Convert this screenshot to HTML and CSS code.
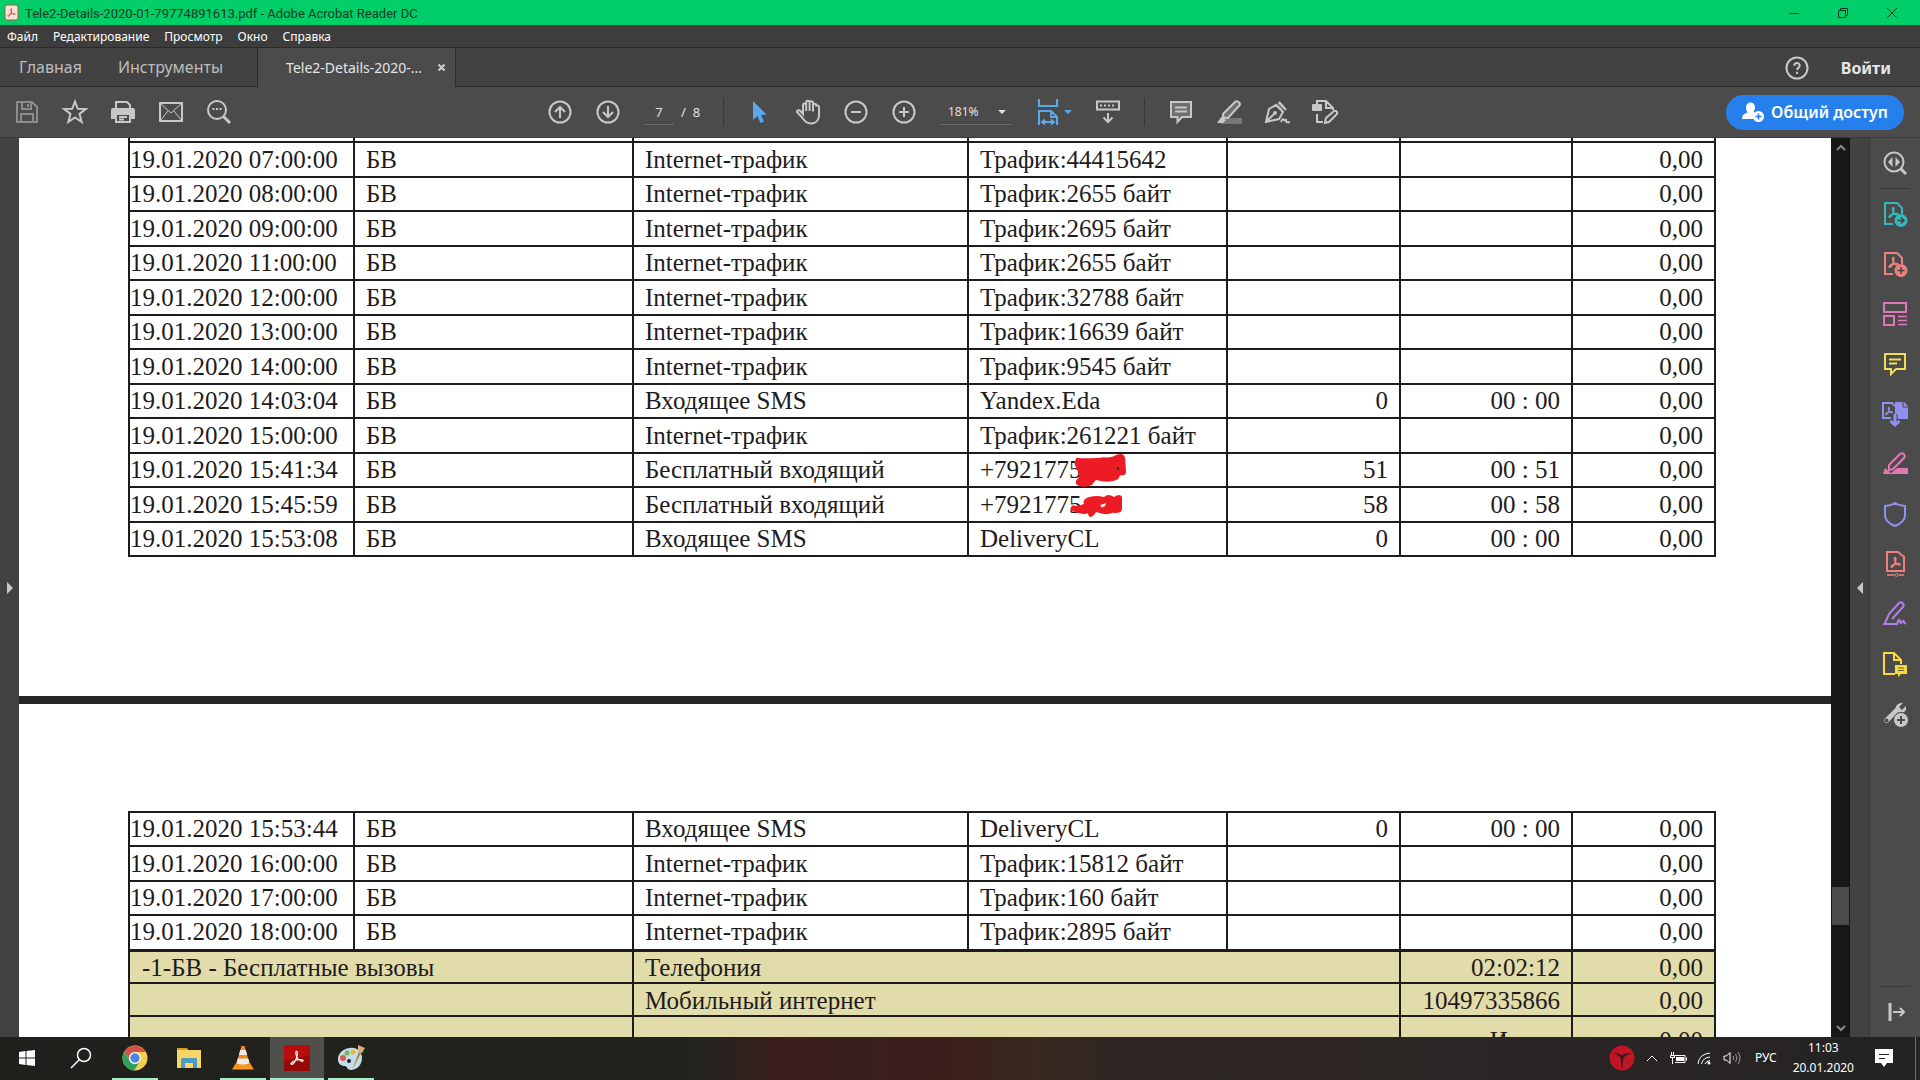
FILE: index.html
```html
<!DOCTYPE html>
<html lang="ru">
<head>
<meta charset="utf-8">
<title>Tele2-Details-2020-01-79774891613.pdf - Adobe Acrobat Reader DC</title>
<link rel="stylesheet" href="styles.css">
</head>
<body>
<svg class="defs" aria-hidden="true">
  <symbol id="pdf-mark" viewBox="0 0 16 16"><path d="M7.500 2c1.500 0 .8 3.500 0 6-.8 2.300-2.500 5.500-4.300 5.800-1.800-.6 1-3 4-3.800 2.500-.8 6-1 6.300.2.200 1.300-3 .7-4.700-1.400C7 6.500 6.300 2.200 7.500 2z" fill="none" stroke="currentColor"/></symbol>
</svg>

<header class="titlebar">
  <svg class="app-icon" width="15" height="17" viewBox="0 0 15 17"><rect x="1" y="1" width="13" height="15" rx="2" fill="#f8e3da" stroke="#b4552f"/><g color="#c8281c"><use href="#pdf-mark" x="2" y="3" width="11" height="11"/></g></svg>
  <span class="title">Tele2-Details-2020-01-79774891613.pdf - Adobe Acrobat Reader DC</span>
  <div class="window-buttons">
    <button aria-label="Свернуть"><svg width="12" height="12" viewBox="0 0 12 12"><path d="M1 6.500h10"/></svg></button>
    <button aria-label="Восстановить"><svg width="12" height="12" viewBox="0 0 12 12"><path d="M1.500 3.500h7v7h-7zM3.500 3.500v-2h7v7h-2"/></svg></button>
    <button aria-label="Закрыть"><svg width="12" height="12" viewBox="0 0 12 12"><path d="M1 1l10 10M11 1L1 11"/></svg></button>
  </div>
</header>

<nav class="menubar">
  <button>Файл</button><button>Редактирование</button><button>Просмотр</button><button>Окно</button><button>Справка</button>
</nav>

<nav class="tabs">
  <a class="tab" href="#home">Главная</a>
  <a class="tab" href="#tools">Инструменты</a>
  <div class="tab-active"><a href="#document">Tele2-Details-2020-...</a><button aria-label="Закрыть вкладку"><svg width="9" height="9" viewBox="0 0 9 9"><path d="M1.500 1.500l6 6M7.500 1.500l-6 6"/></svg></button></div>
  <div class="account">
    <button aria-label="Справка"><svg width="24" height="24" viewBox="0 0 24 24" fill="none" stroke="#c8c8c8" stroke-width="2"><circle cx="12" cy="12" r="10.500"/><path d="M9.300 9.800c0-3.600 5.400-3.600 5.400-.2 0 2-2.600 2.200-2.600 4.400M12.100 15.800v2.200"/></svg></button>
    <button class="sign-in">Войти</button>
  </div>
</nav>

<div class="toolbar">
  <div class="tools tools-left">
    <button class="disabled" aria-label="Сохранить"><svg class="ico" viewBox="0 0 24 24"><path d="M2 2h15l5 5v15H2zM7 2v7h9V2M6 22v-8h12v8M13 4v3"/></svg></button>
    <button aria-label="Избранное"><svg class="ico" viewBox="0 0 24 24"><path d="M12 1.500l2.800 7.300 8 .3-6.300 4.900 2.200 8L12 17.500 5.300 22l2.200-8-6.300-4.900 8-.3z"/></svg></button>
    <button aria-label="Печать"><svg class="ico" viewBox="0 0 24 24"><path d="M5 8V2h11l3 3v3"/><path d="M2 8h20a2 2 0 0 1 2 2v9h-4v-4H4v4H0v-9a2 2 0 0 1 2-2z" fill="currentColor" stroke="none"/><path d="M5 15v7h14v-7M8 17h8M8 19.500h5"/></svg></button>
    <button aria-label="Отправить по почте"><svg class="ico" viewBox="0 0 24 24"><path d="M1 3h22v18H1z"/><path d="M1 3l11 10L23 3M1 21l8-10M23 21l-8-10" stroke-width="1"/></svg></button>
    <button aria-label="Поиск"><svg class="ico" viewBox="0 0 24 24"><circle cx="10" cy="10" r="9"/><path d="M16.500 16.500L23 23" stroke-width="3"/><path d="M5.500 9h2M9 9h2M12.500 9h2"/></svg></button>
  </div>
  <div class="tools">
    <button aria-label="Предыдущая страница"><svg class="ico" viewBox="0 0 24 24"><circle cx="12" cy="12" r="10.500"/><path d="M12 18V7M7 12l5-5 5 5"/></svg></button>
    <button aria-label="Следующая страница"><svg class="ico" viewBox="0 0 24 24"><circle cx="12" cy="12" r="10.500"/><path d="M12 6v11M7 12l5 5 5-5"/></svg></button>
    <div class="pager"><input type="text" value="7" aria-label="Номер страницы"><span>/</span><span>8</span></div>
    <i class="divider"></i>
    <button class="selected" aria-label="Выделение"><svg class="ico" viewBox="0 0 24 24"><path d="M5 1l13.500 13.500-5.500.5 3 6.500-3.500 1.500-3-7L5 20z" fill="currentColor" stroke="none"/></svg></button>
    <button aria-label="Рука"><svg class="ico" viewBox="0 0 24 24"><path d="M7 14V5a1.600 1.600 0 0 1 3.200 0v6V2.500a1.600 1.600 0 0 1 3.400 0V11 3a1.600 1.600 0 0 1 3.400 0v8.500V5.500a1.600 1.600 0 0 1 3.300 0C22.500 5 23 6 23 8v7c0 5-3 8.500-8 8.500-4 0-6-1.500-8.500-5.500L1 11.800c0-1.600 2-2 3.500-.8L7 14z"/></svg></button>
    <button aria-label="Уменьшить"><svg class="ico" viewBox="0 0 24 24"><circle cx="12" cy="12" r="10.500"/><path d="M7 12h10"/></svg></button>
    <button aria-label="Увеличить"><svg class="ico" viewBox="0 0 24 24"><circle cx="12" cy="12" r="10.500"/><path d="M7 12h10M12 7v10"/></svg></button>
    <button class="zoom-level" aria-label="Масштаб"><span>181%</span><i class="caret"></i></button>
    <button class="selected fit" aria-label="По ширине"><svg width="24" height="28" viewBox="0 0 24 28"><path d="M3 1v7h18V1M3 27V13h12l6 6v8M15 13v6h6M6 24h12M9 21.500L6 24l3 2.500M15 21.500l3 2.500-3 2.500"/></svg><i class="caret"></i></button>
    <button aria-label="Режим чтения"><svg class="ico" viewBox="0 0 24 24"><path d="M1 1.500h22v8H1zM12 13v9M7.500 17.500L12 22l4.500-4.500"/><path d="M4 5.500h2M8 5.500h2M12 5.500h2M16 5.500h2"/></svg></button>
    <i class="divider"></i>
    <button aria-label="Комментарий"><svg class="ico" viewBox="0 0 24 24"><path d="M2 2h20v15h-9l-4.500 5v-5H2z" fill="#6f6f6f"/><path d="M6 7.500h12M6 11.500h12"/></svg></button>
    <button aria-label="Выделить текст"><svg class="ico" viewBox="0 0 24 24"><path d="M9 18h16v6H3z" fill="#777" stroke="none"/><path d="M6 14L18 2c2-2 6 1 4.500 3.500L11 18l-4.500-.5z" fill="#6f6f6f"/><path d="M5 16l4 4-3 3H0z" fill="currentColor" stroke="none"/></svg></button>
    <button aria-label="Подписать"><svg class="ico" viewBox="0 0 24 24"><path d="M14 1l6 6-3 3-6-5z" fill="#777" stroke="none"/><path d="M1 22L4 9l7-4 7 7-4 7zM1 22l8-8M14 2l7 8M16 22c3-7 3 2 5-3 0 5 2 3 4 3"/><circle cx="10" cy="13" r="1"/></svg></button>
    <button aria-label="Редактировать"><svg class="ico" viewBox="0 0 24 24"><rect x="-1" y="4" width="10" height="7" rx="1" fill="currentColor" stroke="none"/><path d="M4 4V1h9l7 7v2M13 1v7h7M4 14v8h6M12 23l1-5 8-7c2-1 4 1 3 3l-8 8z"/></svg></button>
  </div>
  <div class="share-area"><button class="share"><svg width="22" height="20" viewBox="0 0 22 20"><path d="M4 5c0-6 9-6 9 0 0 2.500-1 4-1.500 5l2.500 1c-3 2-3 5-1.500 6H0c0-4 2-5 5.500-6.500C4.500 9 4 7 4 5z" fill="#fff"/><circle cx="16.500" cy="14.500" r="5.500" fill="#fff"/><path d="M16.500 11.500v6M13.500 14.500h6" stroke="#2680eb" stroke-width="1.500"/></svg>Общий доступ</button></div>
</div>

<main class="workspace">
  <button class="rail" aria-label="Показать панель навигации"><i class="arrow-right"></i></button>
  <div class="document">
    <section class="page page-first">
      <table>
        <colgroup><col class="c-date"><col class="c-zone"><col class="c-type"><col class="c-number"><col class="c-count"><col class="c-time"><col class="c-sum"></colgroup>
        <tbody>
        <tr><td></td><td></td><td></td><td></td><td></td><td></td><td></td></tr>
        <tr><td>19.01.2020 07:00:00</td><td>БВ</td><td>Internet-трафик</td><td>Трафик:44415642</td><td></td><td></td><td>0,00</td></tr>
        <tr><td>19.01.2020 08:00:00</td><td>БВ</td><td>Internet-трафик</td><td>Трафик:2655 байт</td><td></td><td></td><td>0,00</td></tr>
        <tr><td>19.01.2020 09:00:00</td><td>БВ</td><td>Internet-трафик</td><td>Трафик:2695 байт</td><td></td><td></td><td>0,00</td></tr>
        <tr><td>19.01.2020 11:00:00</td><td>БВ</td><td>Internet-трафик</td><td>Трафик:2655 байт</td><td></td><td></td><td>0,00</td></tr>
        <tr><td>19.01.2020 12:00:00</td><td>БВ</td><td>Internet-трафик</td><td>Трафик:32788 байт</td><td></td><td></td><td>0,00</td></tr>
        <tr><td>19.01.2020 13:00:00</td><td>БВ</td><td>Internet-трафик</td><td>Трафик:16639 байт</td><td></td><td></td><td>0,00</td></tr>
        <tr><td>19.01.2020 14:00:00</td><td>БВ</td><td>Internet-трафик</td><td>Трафик:9545 байт</td><td></td><td></td><td>0,00</td></tr>
        <tr><td>19.01.2020 14:03:04</td><td>БВ</td><td>Входящее SMS</td><td>Yandex.Eda</td><td>0</td><td>00 : 00</td><td>0,00</td></tr>
        <tr><td>19.01.2020 15:00:00</td><td>БВ</td><td>Internet-трафик</td><td>Трафик:261221 байт</td><td></td><td></td><td>0,00</td></tr>
        <tr><td>19.01.2020 15:41:34</td><td>БВ</td><td>Бесплатный входящий</td><td><span class="masked">+7921775<svg width="56" height="38" viewBox="0 0 56 50" preserveAspectRatio="none"><path d="M5 10Q2 14 5 20t3 13q-6 8-1 11 8 4 14-1l4-6q14 5 22-1l2-5q7 0 6-6l-1-18q-2-7-9-3-4 4-12 3-10 2-28 1z" fill="#ed1c24"/><path d="M45 22l3-3v3l1 2z" fill="#4b2020"/></svg></span></td><td>51</td><td>00 : 51</td><td>0,00</td></tr>
        <tr><td>19.01.2020 15:45:59</td><td>БВ</td><td>Бесплатный входящий</td><td><span class="masked">+7921775<svg width="56" height="38" viewBox="0 0 56 50" preserveAspectRatio="none"><path d="M2 24q-5 4 0 8 8 5 15 3 1 8 6 2l2-4q10 5 17 1 9 1 9-5V13q-2-5-8 0-6-5-10 0-9-3-17 1-5 4-3 8-4 4-11 2z" fill="#ed1c24"/><path d="M29 24l6-3-1 4-3 2z" fill="#fff"/></svg></span></td><td>58</td><td>00 : 58</td><td>0,00</td></tr>
        <tr><td>19.01.2020 15:53:08</td><td>БВ</td><td>Входящее SMS</td><td>DeliveryCL</td><td>0</td><td>00 : 00</td><td>0,00</td></tr>
        </tbody>
      </table>
    </section>
    <section class="page page-second">
      <table>
        <colgroup><col class="c-date"><col class="c-zone"><col class="c-type"><col class="c-number"><col class="c-count"><col class="c-time"><col class="c-sum"></colgroup>
        <tbody>
        <tr><td>19.01.2020 15:53:44</td><td>БВ</td><td>Входящее SMS</td><td>DeliveryCL</td><td>0</td><td>00 : 00</td><td>0,00</td></tr>
        <tr><td>19.01.2020 16:00:00</td><td>БВ</td><td>Internet-трафик</td><td>Трафик:15812 байт</td><td></td><td></td><td>0,00</td></tr>
        <tr><td>19.01.2020 17:00:00</td><td>БВ</td><td>Internet-трафик</td><td>Трафик:160 байт</td><td></td><td></td><td>0,00</td></tr>
        <tr><td>19.01.2020 18:00:00</td><td>БВ</td><td>Internet-трафик</td><td>Трафик:2895 байт</td><td></td><td></td><td>0,00</td></tr>
        </tbody>
        <tbody class="totals">
        <tr><td colspan="2">-1-БВ - Бесплатные вызовы</td><td colspan="3">Телефония</td><td>02:02:12</td><td>0,00</td></tr>
        <tr><td colspan="2"></td><td colspan="3">Мобильный интернет</td><td>10497335866</td><td>0,00</td></tr>
        <tr class="sum"><td colspan="2"></td><td colspan="3"></td><td>Итого:</td><td>0,00</td></tr>
        </tbody>
      </table>
    </section>
  </div>
  <div class="scrollbar">
    <svg width="10" height="8" viewBox="0 0 10 8"><path d="M1 6l4-4 4 4"/></svg>
    <div class="track"><div class="thumb"></div></div>
    <svg width="10" height="8" viewBox="0 0 10 8"><path d="M1 2l4 4 4-4"/></svg>
  </div>
  <button class="rail" aria-label="Скрыть панель инструментов"><i class="arrow-left"></i></button>
  <aside class="side">
    <button class="side-search" aria-label="Найти инструмент"><svg class="ico" viewBox="0 0 24 24"><circle cx="11" cy="11" r="9.500"/><path d="M18 18l5 5" stroke-width="3"/><path d="M9.500 6v10L5 11zM12.500 6v10l4.500-5z" fill="currentColor" stroke="none"/></svg></button>
    <div class="side-tools">
      <button class="teal" aria-label="Экспорт PDF"><svg class="ico" viewBox="0 0 24 24"><path d="M10 22H2V1h12l5 5v6"/><use href="#pdf-mark" x="4" y="4" width="13" height="13"/><circle cx="18" cy="18.500" r="6.500" fill="currentColor" stroke="none"/><path d="M14.500 18.500h6M18 15.500l3 3-3 3" stroke="#444" stroke-width="1.500"/></svg></button>
      <button class="red" aria-label="Создать PDF"><svg class="ico" viewBox="0 0 24 24"><path d="M10 22H2V1h12l5 5v6"/><use href="#pdf-mark" x="4" y="4" width="13" height="13"/><circle cx="18" cy="18.500" r="6.500" fill="currentColor" stroke="none"/><path d="M14.500 18.500h7M18 15v7" stroke="#444" stroke-width="1.500"/></svg></button>
      <button class="pink" aria-label="Систематизировать"><svg class="ico" viewBox="0 0 24 24"><path d="M1 1h22v9H1zM1 14h10v9H1z"/><path d="M15 14.500h9M15 18.500h9M15 22.500h9" stroke-width="1.500"/></svg></button>
      <button class="yellow" aria-label="Добавить комментарий"><svg class="ico" viewBox="0 0 24 24"><path d="M2 2h20v15h-9l-5 5v-5H2z"/><path d="M6 7.500h12M6 11.500h8"/></svg></button>
      <button class="violet" aria-label="Объединить файлы"><svg class="ico" viewBox="0 0 24 24"><path d="M12 0h9l4 4v13H12z" fill="currentColor" stroke="none"/><path d="M20 0v5h5" stroke="#444" stroke-width="1"/><path d="M8 16H0V1h9l3 3"/><use href="#pdf-mark" x="1" y="4" width="10" height="10"/><path d="M12 12v9M7.500 18l4.500 5 4.500-5" stroke="#4b4b4b" stroke-width="5"/><path d="M12 12v11M7.500 19l4.500 4 4.500-4" stroke-width="3"/></svg></button>
      <button class="pink" aria-label="Исправления"><svg class="ico" viewBox="0 0 24 24"><path d="M14 16h11v6H7zM0 22l2-6 7 6z" fill="currentColor" stroke="none"/><path d="M6 13L17 2c3-2 6 1 4 4L10 17l-4 1z"/></svg></button>
      <button class="violet" aria-label="Защитить"><svg class="ico" viewBox="0 0 24 24"><path d="M12 1c3 2 6 3 10 3v9c0 5-5 9-10 11C7 22 2 18 2 13V4c4 0 7-1 10-3z"/></svg></button>
      <button class="red" aria-label="Оптимизировать PDF"><svg class="ico" viewBox="0 0 24 24"><path d="M4 0h11l6 5v14H4z"/><use href="#pdf-mark" x="6" y="4" width="13" height="13"/><path d="M4 23h7M16 23h5" stroke-width="1.500"/><circle cx="13.500" cy="23" r="1.500" stroke-width="1"/></svg></button>
      <button class="purple" aria-label="Заполнить и подписать"><svg class="ico" viewBox="0 0 24 24"><path d="M0 22h14l1-3c3-4 1 5 4 1s1 3 4 1M2 21l4-9L16 1c2-2 6 1 4 4L9 17"/></svg></button>
      <button class="gold" aria-label="Отправить на комментирование"><svg class="ico" viewBox="0 0 24 24"><path d="M12 22H1V1h10l7 7v4M11 1v7h7"/><path d="M12 13h12v9h-6l-3 3v-3h-3z" fill="currentColor" stroke="none"/><path d="M15 16h6M15 18.500h6" stroke="#655f25" stroke-width="1"/></svg></button>
      <button aria-label="Добавить инструменты"><svg class="ico" viewBox="0 0 24 24"><path d="M3.500 18.500L14 8" stroke-width="5" stroke-linecap="round"/><path d="M20 1l-4 4 3 3 3.500-4C25 9 19 13 15 10c-5-4-1-10 5-9z" fill="currentColor" stroke="none"/><circle cx="3.500" cy="18.500" r="1" stroke="#4b4b4b"/><circle cx="18" cy="18" r="7.500" fill="currentColor" stroke="#4b4b4b" stroke-width="1"/><path d="M14 18h8M18 14v8" stroke="#4b4b4b"/></svg></button>
    </div>
    <button class="side-collapse" aria-label="Свернуть панель"><svg class="ico" viewBox="0 0 24 24"><path d="M7 3v18" stroke-width="3"/><path d="M10 12h11M17 8l4 4-4 4"/></svg></button>
  </aside>
</main>

<footer class="taskbar">
  <button class="task" aria-label="Пуск"><svg width="18" height="18" viewBox="0 0 18 18" fill="#fff"><path d="M1 3l6.500-1v6.500H1zM8.500 2L17 1v7.500H8.500zM1 9.500h6.500V16L1 15zM8.500 9.500H17V17l-8.500-1z"/></svg></button>
  <button class="task" aria-label="Поиск"><svg width="22" height="22" viewBox="0 0 22 22" fill="none" stroke="#fff" stroke-width="1.500"><circle cx="14" cy="8" r="6.500"/><path d="M9.500 12.500L1 21"/></svg></button>
  <button class="task open" aria-label="Google Chrome"><svg width="26" height="26" viewBox="0 0 26 26"><circle cx="13" cy="13" r="12.500" fill="#f7cf4d"/><path d="M2.200 6.700A12.500 12.500 0 0 1 23.800 7H13a6 6 0 0 0-5.500 8z" fill="#d5524a"/><path d="M2.200 6.700A12.500 12.500 0 0 0 12 25.500l5.500-8.500A6 6 0 0 1 7.800 16z" fill="#2ba060"/><circle cx="13" cy="13" r="6" fill="#fff"/><circle cx="13" cy="13" r="4.700" fill="#4a86e0"/></svg></button>
  <button class="task" aria-label="Проводник"><svg width="26" height="22" viewBox="0 0 26 22"><path d="M1 1h10l2 3H1z" fill="#d99a24"/><path d="M1 3h24v18H1z" fill="#f9d46a"/><path d="M5 21v-9q0-1 1-1h14q1 0 1 1v9h-4v-5H9v5z" fill="#4a9bc2"/></svg></button>
  <button class="task open" aria-label="VLC"><svg width="24" height="26" viewBox="0 0 24 26"><path d="M5 18h14l4 6.500H1z" fill="#f7981d"/><path d="M10.500 1h3l5.500 19H5z" fill="#f08a24"/><path d="M9.300 5h5.400l1.500 5H7.800zM6.700 13.500h10.600l1.200 4.500c-3 2-10 2-13 0z" fill="#efeae4"/></svg></button>
  <button class="task open active" aria-label="Adobe Acrobat Reader"><svg width="26" height="26" viewBox="0 0 26 26"><rect width="26" height="26" rx="1" fill="#b90d0d"/><path d="M0 16l26-6v16H0z" fill="#970808"/><g color="#fff"><use href="#pdf-mark" x="4" y="4" width="18" height="18"/></g></svg></button>
  <button class="task open" aria-label="Paint"><svg width="28" height="26" viewBox="0 0 28 26"><path d="M13 3c7-1 12 4 12 10 0 7-5 12-11 12-4 0-3-3-6-4-4 0-7-2-7-7C1 8 7 3 13 3z" fill="#c3dcec"/><circle cx="6" cy="13" r="3" fill="#de5a4d"/><circle cx="10" cy="8" r="2.500" fill="#74b74f"/><circle cx="16" cy="7" r="2.500" fill="#efb33d"/><circle cx="12" cy="16" r="2" fill="#222"/><path d="M15 25l7-18 2 1z" fill="#b57832"/><path d="M21 0l7 3-3 5-4-1z" fill="#d7ae7c"/></svg></button>
  <div class="tray">
    <svg width="26" height="26" viewBox="0 0 26 26"><circle cx="13" cy="13" r="12.500" fill="#c01525"/><path d="M3 8q10 0 10 3 0-3 10-3-8 3-8.500 5L13 24l-1.500-11Q10 10 3 8z" fill="#3b1a20"/></svg>
    <svg width="14" height="10" viewBox="0 0 14 10"><path d="M2 8l5-5 5 5"/></svg>
    <svg width="18" height="14" viewBox="0 0 18 14"><path d="M6 4.500h10v7H6M17.500 6.500v3M1.500 4.500h4v2h-4zM2.500 1v3M4.500 1v3M3.500 7v6"/><path d="M7 6h8v4H7z" fill="#fff" stroke="none"/></svg>
    <svg width="16" height="14" viewBox="0 0 16 14"><path d="M1 13Q2 3 13 2M4.500 13Q6 6.500 13 6M8 13q1-3 5-3.500"/><circle cx="12" cy="12" r="1.500" fill="#fff" stroke="none"/></svg>
    <svg width="18" height="14" viewBox="0 0 18 14"><path d="M1 5h2.500L7 1.500v11L3.500 9H1z"/><path d="M10 5q1.500 2 0 4M12.500 3q3 4 0 8M15 1q4 6 0 12" stroke="#999"/></svg>
    <span class="lang">РУС</span>
    <div class="clock"><span>11:03</span><span>20.01.2020</span></div>
    <svg class="notice" width="20" height="20" viewBox="0 0 20 20"><path d="M1 1h18v14h-6l-3 4-3-4H1z" fill="#fff" stroke="none"/><path d="M5 6.500h10M5 10.500h6" stroke="#262322"/></svg>
  </div>
  <button class="show-desktop" aria-label="Свернуть все окна"></button>
</footer>
</body>
</html>
```
FILE: styles.css
```css
* { box-sizing: border-box; }

html, body { height: 100%; }

body {
  margin: 0;
  display: flex;
  flex-direction: column;
  overflow: hidden;
  background: #424242;
  color: #e6e6e6;
  font: 12px/16px "Noto Sans", "Open Sans", sans-serif;
}

button {
  margin: 0;
  padding: 0;
  border: 0;
  background: none;
  color: inherit;
  font: inherit;
  display: flex;
  align-items: center;
  justify-content: center;
}

a { color: inherit; text-decoration: none; }
svg { display: block; flex: none; overflow: visible; }
.defs { position: absolute; width: 0; height: 0; }

.ico {
  width: 24px;
  height: 24px;
  fill: none;
  stroke: currentColor;
  stroke-width: 2;
}

/* Title bar */
.titlebar {
  flex: none;
  height: 25px;
  padding: 0 4px;
  display: flex;
  align-items: center;
  gap: 6px;
  background: #00ce69;
  color: #133a20;
}
.title { font-family: Roboto, sans-serif; font-size: 13px; padding-top: 2px; }
.window-buttons { margin-left: auto; display: flex; }
.window-buttons button { width: 49px; height: 22px; }
.window-buttons svg { fill: none; stroke: #14371f; }

/* Menu */
.menubar {
  flex: none;
  height: 22px;
  padding: 2px 0 0 7px;
  display: flex;
  gap: 15px;
  background: #3d3d3d;
  color: #fff;
}

/* Tabs */
.tabs {
  flex: none;
  height: 40px;
  display: flex;
  border-top: 1px solid #2b2b2b;
  background: #424242;
  font-size: 16px;
  line-height: 20px;
  box-shadow: inset 0 -1px #2b2b2b;
}
.tab { padding: 9px 17px 0 19px; color: #bdbdbd; }
.tab-active {
  width: 199px;
  margin-left: 17px;
  padding: 0 9px 0 28px;
  display: flex;
  align-items: center;
  justify-content: space-between;
  border: solid #2b2b2b;
  border-width: 0 1px;
  background: #4b4b4b;
  font-size: 14px;
}
.tab-active svg { fill: none; stroke: #d0d0d0; stroke-width: 2; }
.account {
  margin-left: auto;
  padding-right: 29px;
  display: flex;
  align-items: center;
  gap: 32px;
}
.sign-in { font-weight: 700; }

/* Toolbar */
.toolbar {
  flex: none;
  height: 51px;
  padding: 0 16px 0 15px;
  display: flex;
  align-items: center;
  border-bottom: 1px solid #3a3a3a;
  background: #4b4b4b;
  color: #c8c8c8;
}
.tools { display: flex; align-items: center; gap: 24px; }
.tools-left { flex: 1 1 0; }
.disabled { color: #8c8c8c; }
.selected { color: #5aa7ee; }
.pager { display: flex; align-items: center; width: 55px; gap: 7px; color: #e0e0e0; font-size: 13px; }
.pager input {
  width: 30px;
  height: 26px;
  padding: 0;
  border: 0;
  border-bottom: 1px solid #6b6b6b;
  background: none;
  color: inherit;
  font: inherit;
  text-align: center;
}
.divider { width: 1px; height: 28px; background: #383838; }
.zoom-level {
  width: 72px;
  height: 26px;
  padding: 0 6px 0 8px;
  justify-content: space-between;
  border-bottom: 1px solid #6b6b6b;
  color: #e0e0e0;
  font-size: 12px;
}
.caret {
  border: 4px solid transparent;
  border-top-color: currentColor;
  border-bottom: 0;
}
.fit { gap: 4px; }
.fit svg { fill: none; stroke: currentColor; stroke-width: 2; }
.share-area { flex: 1 1 34px; display: flex; justify-content: flex-end; }
.share {
  height: 35px;
  padding: 0 16px;
  gap: 7px;
  border-radius: 18px;
  background: #2680eb;
  color: #fff;
  font-size: 16px;
  font-weight: 600;
}

/* Work area */
.workspace { flex: 1; min-height: 0; display: flex; }
.rail { flex: none; width: 19px; background: #424242; color: #c8c8c8; }
.arrow-right, .arrow-left { border: 6px solid transparent; }
.arrow-right { border-left-color: currentColor; border-right: 0; }
.arrow-left { border-right-color: currentColor; border-left: 0; }

.document {
  flex: 1;
  min-width: 0;
  display: flex;
  flex-direction: column;
  gap: 8px;
  overflow: hidden;
  background: #252525;
}
.page { padding: 0 116px 0 109px; background: #fff; color: #1d1b1c; }
.page-first {
  flex: none;
  height: 558px;
  display: flex;
  flex-direction: column;
  justify-content: flex-end;
  padding-bottom: 139px;
  overflow: hidden;
}
.page-second { flex: 1; min-height: 0; padding-top: 107px; overflow: hidden; }

table {
  width: 100%;
  table-layout: fixed;
  border-collapse: collapse;
  font: 25px/30px "Liberation Serif", serif;
}
.page-first table { height: 450px; }
.c-date { width: 225px; }
.c-zone { width: 279px; }
.c-type { width: 335px; }
.c-number { width: 259px; }
.c-count { width: 173px; }
.c-time { width: 172px; }
.c-sum { width: 143px; }
tr { height: 34px; }
tr:nth-child(even) { height: 35px; }
td {
  padding: 0 11px;
  border: 2px solid #1d1b1c;
  white-space: nowrap;
}
td:first-child { padding-left: 0; }
td:nth-child(n + 5), .totals td:nth-child(n + 3) { text-align: right; }
.totals { background: #e2dbaa; border-top: 3px solid #1d1b1c; }
.totals tr { height: 33px; }
.totals td { padding-top: 2px; line-height: 28px; }
.totals td:first-child { padding-left: 12px; }
.totals .sum { height: 40px; }
.totals .sum td { padding-top: 10px; vertical-align: top; }

.masked { position: relative; }
.masked svg { position: absolute; left: 91px; top: -4px; }

.scrollbar {
  flex: none;
  width: 19px;
  padding: 6px 0 5px;
  display: flex;
  flex-direction: column;
  align-items: center;
  background: #171717;
}
.scrollbar svg { fill: none; stroke: #8a8a8a; stroke-width: 2; }
.track { flex: 1; display: flex; flex-direction: column; justify-content: flex-end; }
.thumb { width: 17px; height: 38px; margin-bottom: 99px; background: #4b4b4b; }

.side {
  flex: none;
  width: 51px;
  display: flex;
  flex-direction: column;
  align-items: center;
  border-left: 1px solid #393939;
  background: #4b4b4b;
  color: #c8c8c8;
}
.side-search { width: 30px; height: 51px; border-bottom: 1px solid #393939; }
.side-tools { display: flex; flex-direction: column; }
.side-tools button { width: 30px; height: 50px; }
.side-collapse { width: 30px; height: 51px; margin-top: auto; border-top: 1px solid #393939; }
.teal { color: #35b8bd; }
.red { color: #ed8080; }
.pink { color: #e277b5; }
.yellow { color: #f2dc54; }
.violet { color: #9090ee; }
.purple { color: #b07fe8; }
.gold { color: #f8da3f; }

/* Taskbar */
.taskbar {
  flex: none;
  height: 43px;
  display: flex;
  background: linear-gradient(90deg, #20211c 0%, #22231c 35%, #262320 37%, #3d1c1d 41%, #38201f 44%, #3c1e1b 49%, #38281f 54%, #302625 58%, #2b2625 78%, #242223 100%);
  color: #fff;
}
.task { width: 54px; padding-bottom: 2px; }
.open { box-shadow: inset 0 -2px #a5ecc8; margin: 0 4px; width: 46px; }
.active { width: 54px; margin: 0; background: #4f504c; }
.tray {
  margin-left: auto;
  padding: 0 21px 2px 0;
  display: flex;
  align-items: center;
  gap: 10px;
}
.tray svg { fill: none; stroke: #fff; }
.tray svg:first-child { stroke: none; }
.lang { margin: 0 6px 0 4px; }
.clock { display: flex; flex-direction: column; align-items: center; line-height: 20px; }
.notice { margin-left: 10px; }
.show-desktop { width: 5px; border-left: 1px solid #6a6868; }
```
